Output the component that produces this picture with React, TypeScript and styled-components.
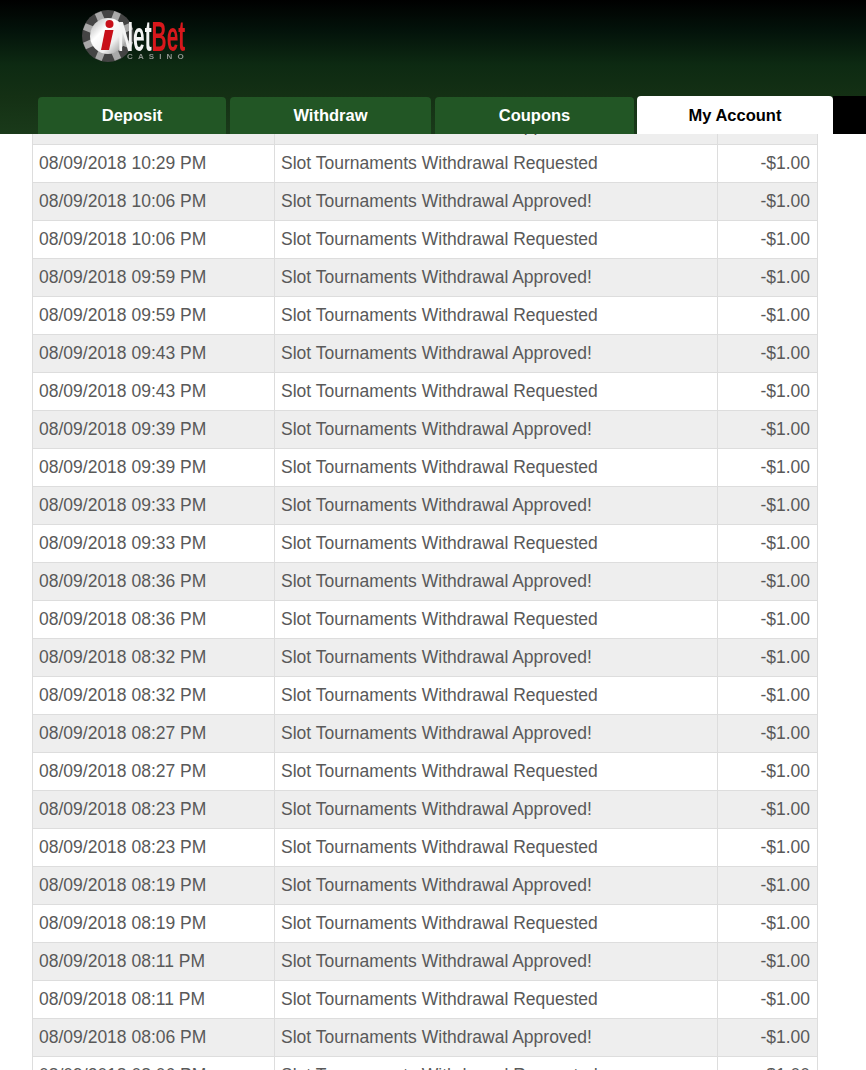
import React from "react";
import styled, { createGlobalStyle } from "styled-components";

const Global = createGlobalStyle`
  html, body { margin: 0; padding: 0; background: #fff; height: 1070px; overflow: hidden; }
  body { font-family: "Liberation Sans", Arial, sans-serif; }
`;

const Page = styled.div`
  width: 866px;
  height: 1070px;
  overflow: hidden;
  display: flex;
  flex-direction: column;
`;

const Header = styled.header`
  height: 134px;
  flex: none;
  position: relative;
  z-index: 2;
  display: flex;
  flex-direction: column;
  background: linear-gradient(180deg, #000 0, #03120a 30px, #0d2a12 65px, #143014 96px, #1a3a1a 134px);
`;

const LogoRow = styled.div`
  height: 96px;
  flex: none;
  padding: 10px 0 0 82px;
  box-sizing: border-box;
`;

const Logo = styled.div`
  display: flex;
  width: 110px;
  height: 52px;
  filter: blur(0.35px);
`;

const LogoWords = styled.div`
  display: flex;
  flex-direction: column;
  margin-left: -16px;
  padding-top: 11px;
`;

const BrandLine = styled.div`
  display: flex;
  height: 31px;
  width: 70px;
  font-size: 43px;
  font-weight: 700;
  line-height: 31px;
  transform: scaleX(0.485);
  transform-origin: left center;
`;

const Net = styled.span`
  color: #f4f4f4;
`;

const Bet = styled.span`
  color: #d8181c;
`;

const Casino = styled.div`
  font-size: 8px;
  line-height: 8px;
  font-weight: 700;
  letter-spacing: 5.1px;
  color: #8f948f;
  margin: 1px 0 0 9px;
  white-space: nowrap;
`;

const TabBar = styled.nav`
  height: 38px;
  flex: none;
  display: flex;
  align-items: flex-end;
  padding-left: 38px;
`;

const Tab = styled.div<{ $w: number; $gap: number; $active?: boolean }>`
  width: ${(p) => p.$w}px;
  margin-right: ${(p) => p.$gap}px;
  height: ${(p) => (p.$active ? 38 : 37)}px;
  flex: none;
  box-sizing: border-box;
  border-radius: 4px 4px 0 0;
  display: flex;
  align-items: center;
  justify-content: center;
  font-size: 16.5px;
  font-weight: 700;
  background: ${(p) => (p.$active ? "#fff" : "#225625")};
  color: ${(p) => (p.$active ? "#000" : "#fff")};
`;

const TabFill = styled.div`
  flex: 1;
  height: 38px;
  background: #000;
`;

const Scroller = styled.main`
  flex: 1;
  min-height: 0;
  overflow: hidden;
  padding-left: 32px;
`;

const Table = styled.table`
  width: 786px;
  margin-top: -28px;
  border-collapse: collapse;
  table-layout: fixed;
  font-size: 17.5px;
  color: #595959;
  border-left: 1px solid #ddd;
`;

const Row = styled.tr<{ $alt: boolean }>`
  height: 38px;
  background: ${(p) => (p.$alt ? "#eee" : "#fff")};
`;

const Cell = styled.td<{ $right?: boolean }>`
  box-sizing: border-box;
  border: 1px solid #ddd;
  padding: 0 ${(p) => (p.$right ? 7 : 6)}px 0 6px;
  white-space: nowrap;
  overflow: hidden;
  text-align: ${(p) => (p.$right ? "right" : "left")};
`;

const times = [
  "10:29", "10:06", "10:06", "09:59", "09:59", "09:43", "09:43", "09:39", "09:39",
  "09:33", "09:33", "08:36", "08:36", "08:32", "08:32", "08:27", "08:27", "08:23",
  "08:23", "08:19", "08:19", "08:11", "08:11", "08:06", "08:06",
];

const rows = [
  { time: "10:29", alt: true, approved: true },
  ...times.map((time, i) => ({ time, alt: i % 2 === 1, approved: i % 2 === 1 })),
];

const tabs = [
  { label: "Deposit", w: 188, gap: 4 },
  { label: "Withdraw", w: 201, gap: 4 },
  { label: "Coupons", w: 199, gap: 3 },
  { label: "My Account", w: 196, gap: 0, active: true },
];

const Chip = () => (
  <svg width="52" height="52" viewBox="0 0 52 52" style={{ flex: "none" }}>
    <defs>
      <linearGradient id="face" x1="0" y1="0" x2="1" y2="1">
        <stop offset="0" stopColor="#a8a8a8" />
        <stop offset="0.35" stopColor="#fff" />
        <stop offset="0.65" stopColor="#f0f0f0" />
        <stop offset="1" stopColor="#7c7c7c" />
      </linearGradient>
    </defs>
    <circle cx="26" cy="26" r="26" fill="#444" />
    {[0, 45, 90, 135, 180, 225, 270, 315].map((a) => (
      <rect
        key={a}
        x="22.5"
        y="0.5"
        width="7"
        height="8"
        fill="#a9a9a9"
        transform={`rotate(${a + 22} 26 26)`}
      />
    ))}
    <circle cx="26" cy="26" r="18" fill="url(#face)" />
    <circle cx="27.5" cy="14" r="4" fill="#c8101a" />
    <path d="M23 20h8.5l-4.5 20h-8z" fill="#c8101a" />
  </svg>
);

export default function App() {
  return (
    <Page>
      <Global />
      <Header>
        <LogoRow>
          <Logo>
            <Chip />
            <LogoWords>
              <BrandLine>
                <Net>Net</Net>
                <Bet>Bet</Bet>
              </BrandLine>
              <Casino>CASINO</Casino>
            </LogoWords>
          </Logo>
        </LogoRow>
        <TabBar>
          {tabs.map((t) => (
            <Tab key={t.label} $w={t.w} $gap={t.gap} $active={t.active}>
              {t.label}
            </Tab>
          ))}
          <TabFill />
        </TabBar>
      </Header>
      <Scroller>
        <Table>
          <colgroup>
            <col style={{ width: 242 }} />
            <col style={{ width: 443 }} />
            <col style={{ width: 100 }} />
          </colgroup>
          <tbody>
            {rows.map((r, i) => (
              <Row key={i} $alt={r.alt}>
                <Cell>{`08/09/2018 ${r.time} PM`}</Cell>
                <Cell>{`Slot Tournaments Withdrawal ${r.approved ? "Approved!" : "Requested"}`}</Cell>
                <Cell $right>-$1.00</Cell>
              </Row>
            ))}
          </tbody>
        </Table>
      </Scroller>
    </Page>
  );
}
